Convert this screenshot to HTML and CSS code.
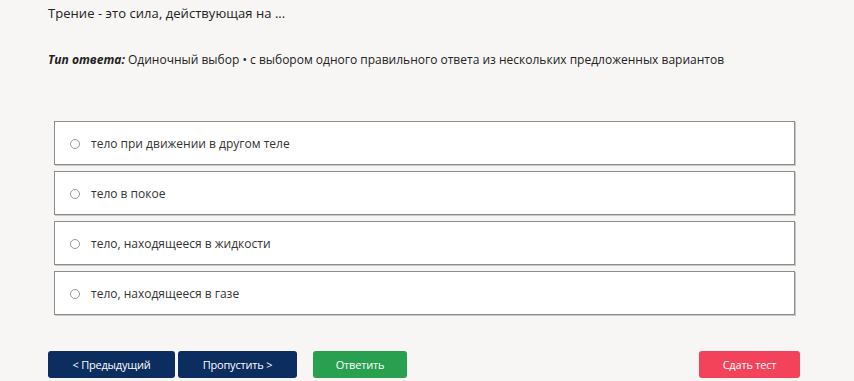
FILE: index.html
```html
<!DOCTYPE html>
<html lang="ru">
<head>
<meta charset="utf-8">
<link rel="stylesheet" href="styles.css">
</head>
<body>
<div class="page">
  <div class="question">Трение - это сила, действующая на ...</div>
  <div class="type"><span class="type-label">Тип ответа:</span> Одиночный выбор • с выбором одного правильного ответа из нескольких предложенных вариантов</div>
  <div class="options">
    <label class="option"><span class="radio"></span><span>тело при движении в другом теле</span></label>
    <label class="option"><span class="radio"></span><span>тело в покое</span></label>
    <label class="option"><span class="radio"></span><span>тело, находящееся в жидкости</span></label>
    <label class="option"><span class="radio"></span><span>тело, находящееся в газе</span></label>
  </div>
  <div class="actions">
    <div class="left">
      <button class="btn navy prev">&lt; Предыдущий</button>
      <button class="btn navy skip">Пропустить &gt;</button>
      <button class="btn green answer">Ответить</button>
    </div>
    <button class="btn red submit">Сдать тест</button>
  </div>
</div>
</body>
</html>
```
FILE: styles.css
```css
html, body {
  margin: 0;
  padding: 0;
  background: #f7f6f4;
}
body {
  font-family: "Open Sans", "Liberation Sans", sans-serif;
  color: #222;
  width: 854px;
  height: 381px;
  overflow: hidden;
}
.page {
  padding: 4px 0 0 48px;
  width: 758px;
}
.question {
  font-size: 13px;
  line-height: 18px;
  letter-spacing: 0.05px;
}
.type {
  margin-top: 29px;
  font-size: 12px;
  line-height: 18px;
  letter-spacing: 0;
}
.type-label {
  font-style: italic;
  font-weight: 700;
}
.options {
  margin: 52px 0 0 6px;
  display: flex;
  flex-direction: column;
  gap: 6px;
  width: 741px;
}
.option {
  box-sizing: border-box;
  height: 44px;
  background: #fff;
  border: 1px solid #8c8c8c;
  box-shadow: 1px 1px 0 #c8c8c8;
  display: flex;
  align-items: center;
  padding: 1px 0 0 15px;
  font-size: 12px;
  color: #333;
  letter-spacing: 0;
}
.radio {
  width: 8px;
  height: 8px;
  border: 1px solid #999;
  border-radius: 50%;
  margin-right: 11px;
  background: #fff;
}
.actions {
  margin-top: 36px;
  display: flex;
  justify-content: space-between;
  width: 752px;
}
.left {
  display: flex;
}
.btn {
  height: 27px;
  border: none;
  border-radius: 3px;
  color: #fff;
  font-family: "Open Sans", "Liberation Sans", sans-serif;
  font-size: 11px;
  letter-spacing: -0.2px;
  padding: 0;
  cursor: pointer;
}
.navy { background: #0b2d5f; }
.green { background: #28a050; }
.red { background: #f2435a; }
.prev { width: 127px; }
.skip { width: 119px; margin-left: 3px; }
.answer { width: 94px; margin-left: 16px; }
.submit { width: 101px; }
```
